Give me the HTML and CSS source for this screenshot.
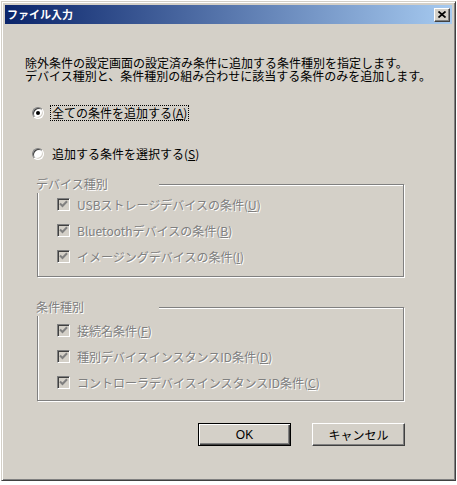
FILE: index.html
```html
<!DOCTYPE html>
<html lang="ja">
<head>
<meta charset="utf-8">
<title>ファイル入力</title>
<link rel="stylesheet" href="styles.css">
</head>
<body>
<div class="window">
  <div class="titlebar">
    <span class="title">ファイル入力</span>
    <span class="close">
      <svg width="8" height="7" viewBox="0 0 8 7"><path d="M0.5 0.5 L7.5 6.5 M7.5 0.5 L0.5 6.5" stroke="#000" stroke-width="1.7" fill="none"/></svg>
    </span>
  </div>
  <div class="client">
    <p class="desc">除外条件の設定画面の設定済み条件に追加する条件種別を指定します。<br>デバイス種別と、条件種別の組み合わせに該当する条件のみを追加します。</p>
    <div class="radio-row first">
      <span class="radio checked"></span>
      <span class="rtext focus">全ての条件を追加する(<u>A</u>)</span>
    </div>
    <div class="radio-row second">
      <span class="radio"></span>
      <span class="rtext">追加する条件を選択する(<u>S</u>)</span>
    </div>
    <div class="group g1">
      <div class="group-label">デバイス種別</div>
      <div class="check-row"><span class="check"><svg width="9" height="8" viewBox="0 0 9 8"><path d="M1 3.5 L3.5 6 L8 1.2" stroke="#808080" stroke-width="2" fill="none"/></svg></span><span class="ctext">USBストレージデバイスの条件(<u>U</u>)</span></div>
      <div class="check-row"><span class="check"><svg width="9" height="8" viewBox="0 0 9 8"><path d="M1 3.5 L3.5 6 L8 1.2" stroke="#808080" stroke-width="2" fill="none"/></svg></span><span class="ctext">Bluetoothデバイスの条件(<u>B</u>)</span></div>
      <div class="check-row"><span class="check"><svg width="9" height="8" viewBox="0 0 9 8"><path d="M1 3.5 L3.5 6 L8 1.2" stroke="#808080" stroke-width="2" fill="none"/></svg></span><span class="ctext">イメージングデバイスの条件(<u>I</u>)</span></div>
    </div>
    <div class="group g2">
      <div class="group-label">条件種別</div>
      <div class="check-row"><span class="check"><svg width="9" height="8" viewBox="0 0 9 8"><path d="M1 3.5 L3.5 6 L8 1.2" stroke="#808080" stroke-width="2" fill="none"/></svg></span><span class="ctext">接続名条件(<u>F</u>)</span></div>
      <div class="check-row"><span class="check"><svg width="9" height="8" viewBox="0 0 9 8"><path d="M1 3.5 L3.5 6 L8 1.2" stroke="#808080" stroke-width="2" fill="none"/></svg></span><span class="ctext">種別デバイスインスタンスID条件(<u>D</u>)</span></div>
      <div class="check-row"><span class="check"><svg width="9" height="8" viewBox="0 0 9 8"><path d="M1 3.5 L3.5 6 L8 1.2" stroke="#808080" stroke-width="2" fill="none"/></svg></span><span class="ctext">コントローラデバイスインスタンスID条件(<u>C</u>)</span></div>
    </div>
    <div class="buttons">
      <span class="btn default">OK</span>
      <span class="btn">キャンセル</span>
    </div>
  </div>
</div>
</body>
</html>
```
FILE: styles.css
```css
html, body {
  margin: 0;
  padding: 0;
  background: #ffffff;
}
body {
  font-family: "Noto Sans CJK JP", "Liberation Sans", sans-serif;
  font-size: 12px;
  color: #000;
}
.window {
  margin: 1px 0 0 1px;
  width: 455px;
  height: 480px;
  box-sizing: border-box;
  background: #d4d0c8;
  border: 1px solid;
  border-color: #d4d0c8 #404040 #404040 #d4d0c8;
  padding: 3px;
  box-shadow: inset 1px 1px #ffffff, inset -1px -1px #808080;
  display: flex;
  flex-direction: column;
}
.titlebar {
  height: 19px;
  flex: none;
  display: flex;
  align-items: center;
  justify-content: space-between;
  padding: 0 2px;
  background: linear-gradient(to right, #0a246a, #a6caf0);
}
.title {
  color: #fff;
  font-weight: bold;
  font-size: 11px;
  line-height: 19px;
}
.close {
  width: 16px;
  height: 14px;
  box-sizing: border-box;
  background: #d4d0c8;
  border: 1px solid;
  border-color: #ffffff #404040 #404040 #ffffff;
  box-shadow: inset -1px -1px #808080;
  display: flex;
  align-items: center;
  justify-content: center;
  padding-bottom: 1px;
}
.close svg { display: block; }
.client {
  flex: 1;
  display: flex;
  flex-direction: column;
  align-items: flex-start;
  padding-left: 20px;
}
.desc {
  margin: 32px 0 0 0;
  line-height: 13px;
  white-space: nowrap;
}
.radio-row {
  display: flex;
  align-items: center;
  height: 16px;
  margin-left: 7px;
}
.radio-row.first { margin-top: 23px; }
.radio-row.second { margin-top: 25px; }
.radio {
  width: 12px;
  height: 12px;
  box-sizing: border-box;
  border-radius: 50%;
  background: #fff;
  border: 1px solid;
  border-color: #808080 #ffffff #ffffff #808080;
  box-shadow: inset 1px 1px #404040, inset -1px -1px #d4d0c8;
  position: relative;
  flex: none;
}
.radio.checked::after {
  content: "";
  position: absolute;
  left: 3px;
  top: 3px;
  width: 4px;
  height: 4px;
  border-radius: 50%;
  background: #000;
}
.rtext {
  margin-left: 6px;
  line-height: 14px;
  padding: 0 1px;
  white-space: nowrap;
  border: 1px solid transparent;
}
.rtext.focus {
  border: 1px dotted #000;
}
.group {
  position: relative;
  margin-left: 12px;
  width: 367px;
  box-sizing: border-box;
  border: 1px solid #808080;
  box-shadow: inset 1px 1px #ffffff, 1px 1px #ffffff;
  padding: 11px 0 12px 19px;
  display: flex;
  flex-direction: column;
  gap: 10px;
}
.group.g1 { margin-top: 22px; }
.group.g2 { margin-top: 30px; padding-top: 14px; padding-bottom: 10px; }
.group-label {
  position: absolute;
  left: -2px;
  top: -10px;
  width: 123px;
  height: 18px;
  line-height: 18px;
  background: #d4d0c8;
  color: #808080;
  text-shadow: 1px 1px 0 #ffffff;
  white-space: nowrap;
}
.check-row {
  display: flex;
  align-items: center;
  height: 16px;
}
.check {
  width: 13px;
  height: 13px;
  box-sizing: border-box;
  background: #d4d0c8;
  border: 1px solid;
  border-color: #808080 #ffffff #ffffff #808080;
  box-shadow: inset 1px 1px #404040, inset -1px -1px #d4d0c8;
  display: flex;
  align-items: center;
  justify-content: center;
  flex: none;
}
.check svg { display: block; }
.ctext {
  margin-left: 7px;
  color: #808080;
  text-shadow: 1px 1px 0 #ffffff;
  white-space: nowrap;
}
.ctext u { text-decoration-color: #808080; }
.buttons {
  margin-top: 22px;
  align-self: stretch;
  display: flex;
  gap: 21px;
  padding-left: 173px;
}
.btn {
  width: 93px;
  height: 23px;
  box-sizing: border-box;
  display: flex;
  align-items: center;
  justify-content: center;
  background: #d4d0c8;
  border: 1px solid;
  border-color: #ffffff #404040 #404040 #ffffff;
  box-shadow: inset -1px -1px #808080;
  font-family: "Liberation Sans", "Noto Sans CJK JP", sans-serif;
  font-size: 12px;
}
.btn.default {
  border: 1px solid #000;
  box-shadow: inset 1px 1px #ffffff, inset -1px -1px #404040, inset -2px -2px #808080;
}
```
